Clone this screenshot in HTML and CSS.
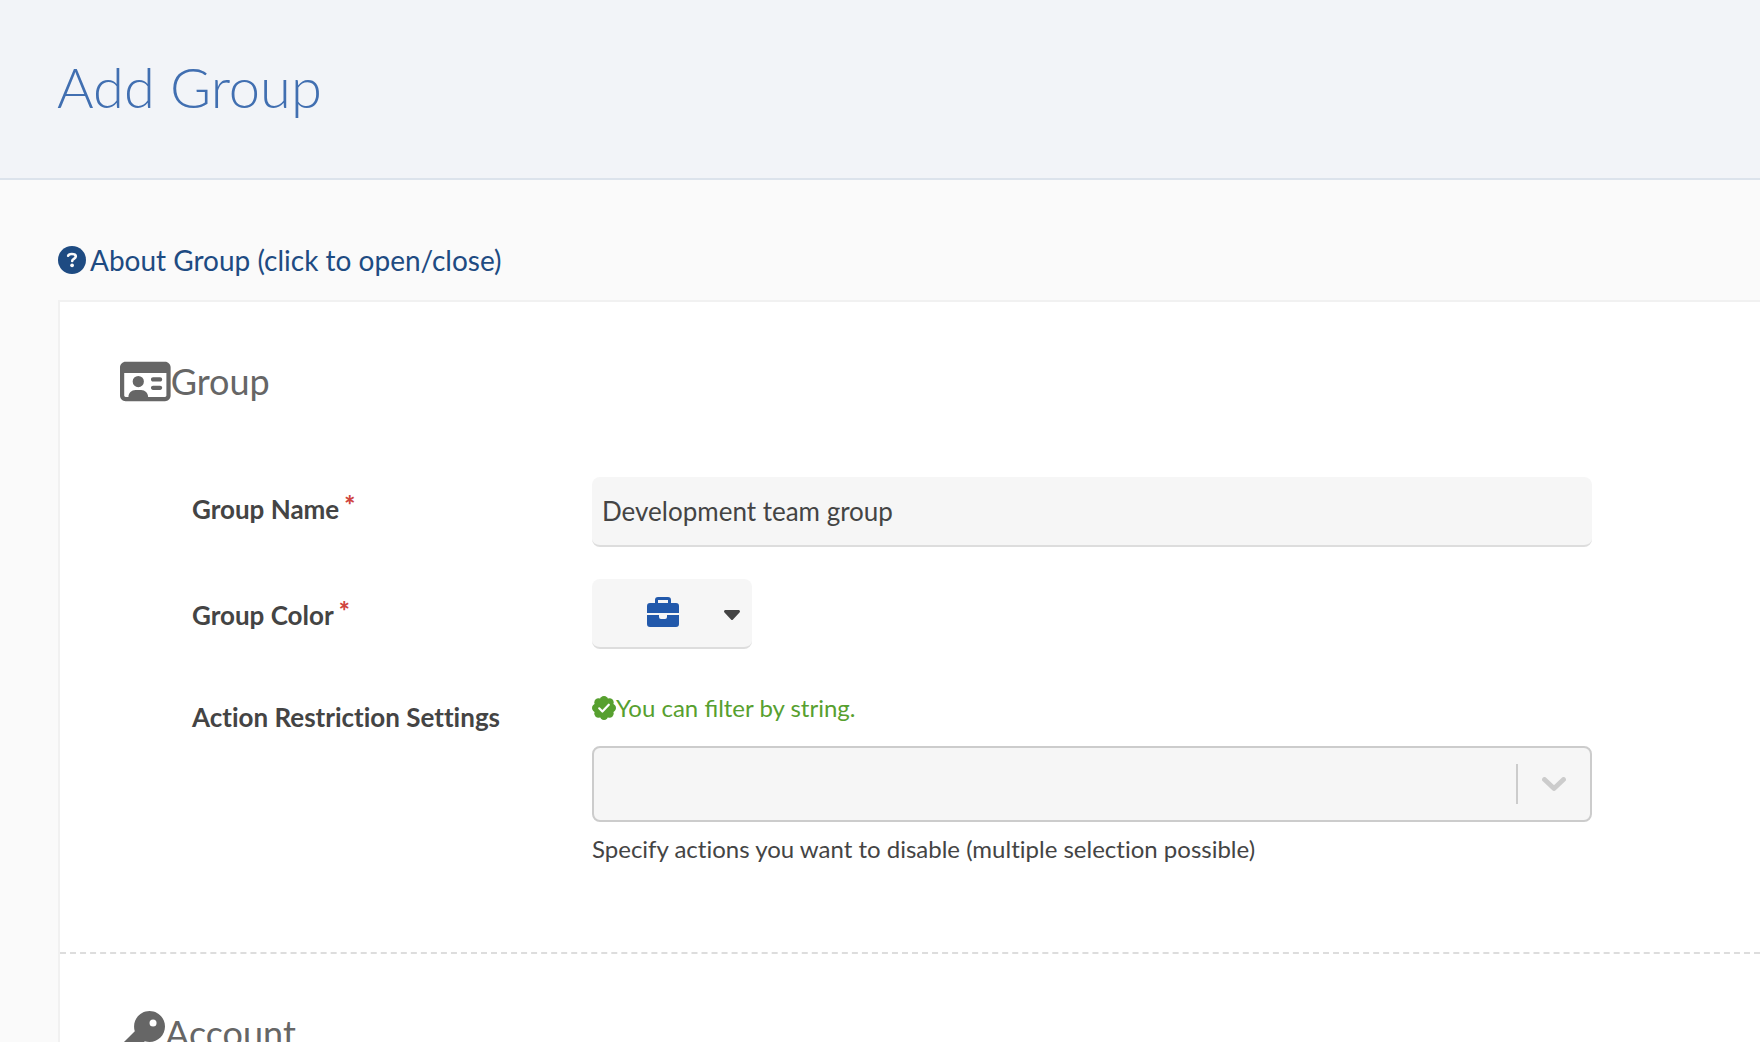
FILE: index.html
```html
<!DOCTYPE html>
<html lang="en">
<head>
<meta charset="utf-8">
<meta name="viewport" content="width=device-width, initial-scale=1">
<title>Add Group</title>
<link rel="stylesheet" href="styles.css">
</head>
<body>
<header class="page-header">
  <h1 class="page-title">Add Group</h1>
</header>
<main class="content">
  <a class="about" href="#about">
    <svg class="about-icon" viewBox="0 0 28 28" aria-hidden="true"><circle cx="14" cy="14" r="14" fill="currentColor"/><path d="M10.200 9.800c.3-1.200 1.600-1.800 3.600-1.800 2.600 0 4 .9 4 2.500 0 2.400-3.600 2.300-3.600 4.500" fill="none" stroke="#fafafa" stroke-width="2.600" stroke-linecap="round"/><circle cx="14.100" cy="19.300" r="1.900" fill="#fafafa"/></svg>
    <span>About Group (click to open/close)</span>
  </a>
  <form class="card">
    <section class="section">
      <h2 class="section-title">
        <svg class="section-icon" viewBox="0 0 576 512" aria-hidden="true"><path fill="currentColor" d="M528 160l0 256c0 8.800-7.200 16-16 16l-192 0c0-44.200-35.800-80-80-80l-64 0c-44.200 0-80 35.800-80 80l-32 0c-8.800 0-16-7.200-16-16l0-256 480 0zM64 32C28.700 32 0 60.700 0 96L0 416c0 35.300 28.700 64 64 64l448 0c35.300 0 64-28.700 64-64l0-320c0-35.300-28.700-64-64-64L64 32zM272 256a64 64 0 1 0 -128 0 64 64 0 1 0 128 0zm104-48c-13.300 0-24 10.700-24 24s10.700 24 24 24l80 0c13.300 0 24-10.700 24-24s-10.700-24-24-24l-80 0zm0 96c-13.300 0-24 10.700-24 24s10.700 24 24 24l80 0c13.300 0 24-10.700 24-24s-10.700-24-24-24l-80 0z"/></svg>
        <span>Group</span>
      </h2>
      <div class="fields">
        <div class="field">
          <label class="label label-text" for="group-name">Group Name<span class="required">*</span></label>
          <input class="input" id="group-name" type="text" value="Development team group" required>
        </div>
        <div class="field">
          <label class="label" for="group-color">Group Color<span class="required">*</span></label>
          <button class="color-button" id="group-color" type="button" aria-haspopup="listbox">
            <svg class="briefcase" viewBox="0 0 32 32" aria-hidden="true"><path fill="currentColor" fill-rule="evenodd" d="M8 6V3a3 3 0 0 1 3-3h10a3 3 0 0 1 3 3v3h5a3 3 0 0 1 3 3v7H0V9a3 3 0 0 1 3-3zM11 3v3h10V3zM0 18h12v2a2 2 0 0 0 2 2h4a2 2 0 0 0 2-2v-2h12v9a3 3 0 0 1-3 3H3a3 3 0 0 1-3-3z"/></svg>
            <svg class="caret" viewBox="0 0 16 14" aria-hidden="true"><path fill="currentColor" d="M1.500 4h13c1.300 0 2 1.500 1 2.500L9 13.400a1.400 1.400 0 0 1-2 0L.5 6.500C-.5 5.500.2 4 1.500 4z"/></svg>
          </button>
        </div>
        <div class="field">
          <label class="label" for="restrictions">Action Restriction Settings</label>
          <div class="restriction">
            <p class="hint">
              <svg class="hint-icon" viewBox="0 0 24 24" aria-hidden="true"><g fill="currentColor"><circle cx="12" cy="12" r="9.500"/><circle cx="12" cy="4.200" r="4.200"/><circle cx="17.500" cy="6.500" r="4.200"/><circle cx="19.800" cy="12" r="4.200"/><circle cx="17.500" cy="17.500" r="4.200"/><circle cx="12" cy="19.800" r="4.200"/><circle cx="6.500" cy="17.500" r="4.200"/><circle cx="4.200" cy="12" r="4.200"/><circle cx="6.500" cy="6.500" r="4.200"/></g><path d="M7.200 12.300l3.200 3.200 6.400-6.800" fill="none" stroke="#fff" stroke-width="2.200" stroke-linecap="round" stroke-linejoin="round"/></svg>
              <span>You can filter by string.</span>
            </p>
            <div class="select-box">
              <select class="select" id="restrictions"><option value=""></option></select>
              <span class="indicator">
                <svg class="chevron" viewBox="0 0 24 14" aria-hidden="true"><path d="M2.500 2.500L12 11.500l9.500-9" fill="none" stroke="currentColor" stroke-width="4.800" stroke-linecap="round" stroke-linejoin="round"/></svg>
              </span>
            </div>
            <p class="help">Specify actions you want to disable (multiple selection possible)</p>
          </div>
        </div>
      </div>
    </section>
    <section class="section">
      <h2 class="section-title">
        <svg class="section-icon" viewBox="0 0 512 512" aria-hidden="true"><path fill="currentColor" d="M336 352c97.200 0 176-78.800 176-176S433.200 0 336 0S160 78.800 160 176c0 18.700 2.900 36.800 8.300 53.700L7 391c-4.500 4.500-7 10.600-7 17v80c0 13.300 10.700 24 24 24h80c13.300 0 24-10.700 24-24v-40h40c13.300 0 24-10.700 24-24v-40h40c6.400 0 12.500-2.500 17-7l33.300-33.300c16.900 5.400 35 8.300 53.700 8.300zM376 96a40 40 0 1 1 0 80 40 40 0 1 1 0-80z"/></svg>
        <span>Account</span>
      </h2>
    </section>
  </form>
</main>
</body>
</html>
```
FILE: styles.css
```css
* { box-sizing: border-box; }

body {
  margin: 0;
  height: 100vh;
  overflow: hidden;
  background: #fafafa;
  color: #444;
  font-family: Lato, "Noto Sans", sans-serif;
  font-size: 24px;
  line-height: 32px;
}

h1, h2, p { margin: 0; }
svg { display: block; flex: none; }

.page-header {
  padding: 51px 57px 55px;
  border-bottom: 2px solid #dce3ec;
  background: #f2f4f8;
}

.page-title {
  color: #416fb1;
  font-size: 56px;
  font-weight: 300;
  line-height: 72px;
}

.content { padding: 64px 0 0 58px; }

.about {
  display: inline-flex;
  align-items: center;
  gap: 4px;
  margin-bottom: 24px;
  color: #1e4b82;
  font-size: 28px;
  text-decoration: none;
}
.about-icon { width: 28px; height: 28px; }

.card {
  border: solid #f1f1f1;
  border-width: 2px 0 0 2px;
  background: #fff;
}

.section { padding: 57px 60px 87px; }
.section + .section { border-top: 2px dashed #ddd; }

.section-title {
  display: flex;
  align-items: center;
  color: #666;
  font-size: 36px;
  font-weight: 400;
  line-height: 45px;
}
.section-icon { height: 45px; }

.fields {
  display: grid;
  gap: 32px;
  padding: 73px 0 0 72px;
}
.field {
  display: grid;
  grid-template-columns: 400px minmax(0, 1000px);
  align-items: start;
}

.label {
  padding-top: 20px;
  font-size: 26px;
  font-weight: 700;
  font-variant-ligatures: none;
}
.label-text { padding-top: 16px; }
.required {
  margin-left: 5px;
  color: #d0453f;
  font-weight: 900;
  line-height: 24px;
  vertical-align: top;
}

.input,
.color-button {
  height: 70px;
  border: 0;
  border-bottom: 2px solid #ddd;
  border-radius: 8px;
  background: #f6f6f6;
  color: #444;
  font: inherit;
}
.input {
  width: 100%;
  padding: 0 10px;
  font-size: 26px;
}
.color-button {
  display: flex;
  align-items: center;
  justify-content: space-between;
  width: 160px;
  padding: 0 12px 0 55px;
}
.briefcase { width: 32px; height: 32px; color: #2259ab; }
.caret { width: 16px; height: 14px; }

.restriction { padding-top: 11px; }
.hint {
  display: flex;
  align-items: center;
  color: #57a02f;
}
.hint-icon { width: 24px; height: 24px; }

.select-box {
  display: grid;
  align-items: center;
  height: 76px;
  margin: 22px 0 11px;
  border: 2px solid #ccc;
  border-radius: 8px;
  background: #f6f6f6;
}
.select,
.indicator { grid-area: 1 / 1; }
.select {
  width: 100%;
  height: 72px;
  padding: 0 88px 0 16px;
  border: 0;
  appearance: none;
  background: transparent;
  color: inherit;
  font: inherit;
}
.indicator {
  display: flex;
  align-items: center;
  justify-self: end;
  height: 40px;
  padding: 0 24px;
  border-left: 2px solid #ccc;
  color: #ccc;
  pointer-events: none;
}
.chevron { width: 24px; height: 14px; }

.help { font-variant-ligatures: none; }
```
